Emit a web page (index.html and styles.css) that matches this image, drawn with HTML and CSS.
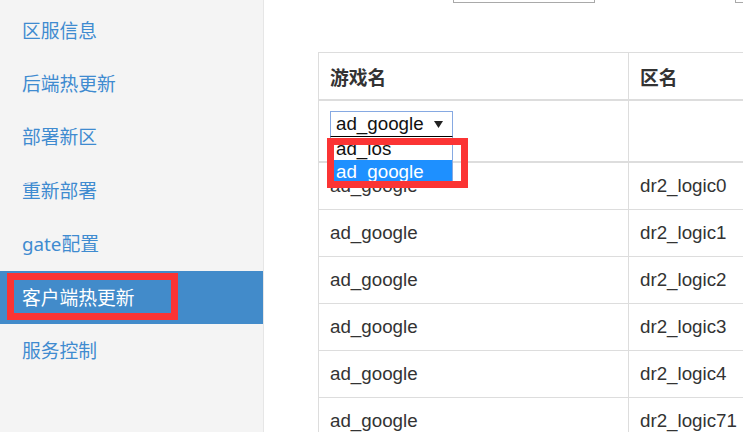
FILE: index.html
```html
<!DOCTYPE html>
<html lang="zh-CN">
<head>
<meta charset="utf-8">
<title>客户端热更新</title>
<link rel="stylesheet" href="styles.css">
</head>
<body>
<div class="page">
  <nav class="sidebar">
    <a class="nav-item">区服信息</a>
    <a class="nav-item">后端热更新</a>
    <a class="nav-item">部署新区</a>
    <a class="nav-item">重新部署</a>
    <a class="nav-item">gate配置</a>
    <a class="nav-item active">客户端热更新<span class="mark"></span></a>
    <a class="nav-item">服务控制</a>
  </nav>
  <main class="main">
    <div class="topbar">
      <div class="tb-box tb-a"></div>
      <div class="tb-box tb-b"></div>
    </div>
    <table class="grid">
      <thead>
        <tr class="head-row">
          <th class="c1">游戏名</th>
          <th class="c2">区名</th>
        </tr>
        <tr class="filter-row">
          <th class="c1">
            <div class="sel-wrap">
              <div class="sel">
                <span class="sel-text">ad_google</span>
                <svg class="sel-arrow" width="9" height="7" viewBox="0 0 9 7"><path d="M0 0H9L4.5 7Z" fill="#222"/></svg>
              </div>
              <div class="listbox">
                <div class="opt">ad_ios</div>
                <div class="opt selected">ad_google</div>
              </div>
              <div class="mark mark-list"></div>
            </div>
          </th>
          <th class="c2"></th>
        </tr>
      </thead>
      <tbody>
        <tr><td>ad_google</td><td>dr2_logic0</td></tr>
        <tr><td>ad_google</td><td>dr2_logic1</td></tr>
        <tr><td>ad_google</td><td>dr2_logic2</td></tr>
        <tr><td>ad_google</td><td>dr2_logic3</td></tr>
        <tr><td>ad_google</td><td>dr2_logic4</td></tr>
        <tr><td>ad_google</td><td>dr2_logic71</td></tr>
      </tbody>
    </table>
  </main>
</div>
</body>
</html>
```
FILE: styles.css
```css
html, body {
  margin: 0;
  padding: 0;
  height: 100%;
  overflow: hidden;
  background: #fff;
}

.page {
  display: flex;
  height: 100vh;
}

.sidebar {
  width: 263px;
  flex: 0 0 auto;
  background: #f4f4f4;
  border-right: 1px solid #e6e6e6;
  padding-top: 4px;
  box-sizing: content-box;
  display: flex;
  flex-direction: column;
}

.nav-item {
  position: relative;
  display: flex;
  align-items: center;
  box-sizing: border-box;
  height: 53.4px;
  flex: 0 0 auto;
  padding-left: 22px;
  padding-bottom: 3px;
  font-family: "Noto Sans", "Noto Sans CJK SC", sans-serif;
  font-size: 18.75px;
  color: #3f8bd0;
  text-decoration: none;
}

.nav-item.active {
  background: #428bca;
  color: #fff;
}

.mark {
  position: absolute;
  box-sizing: border-box;
  border: 7px solid #fb3434;
  pointer-events: none;
}

.nav-item .mark {
  left: 7px;
  top: 2px;
  width: 171px;
  height: 47px;
}

.main {
  flex: 1;
  min-width: 0;
  overflow: hidden;
}

.topbar {
  height: 3px;
  overflow: hidden;
  display: flex;
  align-items: flex-end;
}

.tb-box {
  flex: 0 0 auto;
  height: 28px;
  box-sizing: border-box;
  border: 1px solid #a9a9a9;
  background: #fff;
}

.tb-a {
  margin-left: 189px;
  width: 142px;
}

.tb-b {
  margin-left: 140px;
  width: 40px;
}

.grid {
  margin-top: 49px;
  margin-left: 54px;
  border-collapse: separate;
  border-spacing: 0;
  table-layout: fixed;
  width: 611px;
  border-top: 1px solid #ddd;
  border-left: 1px solid #ddd;
  font-family: "Liberation Sans", "Noto Sans CJK SC", sans-serif;
  font-size: 18.75px;
  color: #333;
}

.grid th,
.grid td {
  border-right: 1px solid #ddd;
  border-bottom: 1px solid #ddd;
  padding: 0 11px;
  text-align: left;
  vertical-align: middle;
  white-space: nowrap;
}

.grid .c1 {
  width: 310px;
  box-sizing: border-box;
}

.head-row th {
  height: 46px;
  border-bottom-width: 2px;
  font-family: "Liberation Sans", "Noto Sans CJK SC", sans-serif;
  font-weight: 700;
  color: #333;
}

.filter-row th {
  height: 50px;
  padding-top: 10px;
  border-bottom-width: 2px;
  vertical-align: top;
  font-weight: 400;
}

.grid td {
  height: 46px;
}

.sel-wrap {
  position: relative;
  width: 123px;
}

.sel {
  display: flex;
  align-items: center;
  justify-content: space-between;
  box-sizing: border-box;
  width: 123px;
  height: 26px;
  border: 1px solid #86a9e2;
  padding: 0 9px 0 5px;
  background: #fff;
  color: #111;
  line-height: 24px;
}

.sel-arrow {
  display: block;
}

.listbox {
  position: absolute;
  z-index: 2;
  left: 0;
  top: 25px;
  width: 123px;
  box-sizing: border-box;
  border: 1px solid #86a9e2;
  border-top: 1px solid #000;
  background: #fff;
  color: #111;
}

.opt {
  height: 23px;
  line-height: 23px;
  padding-left: 5px;
}

.opt.selected {
  background: #1e90ff;
  color: #fff;
}

.mark-list {
  z-index: 3;
  left: -3px;
  top: 27px;
  width: 141px;
  height: 50px;
}
```
